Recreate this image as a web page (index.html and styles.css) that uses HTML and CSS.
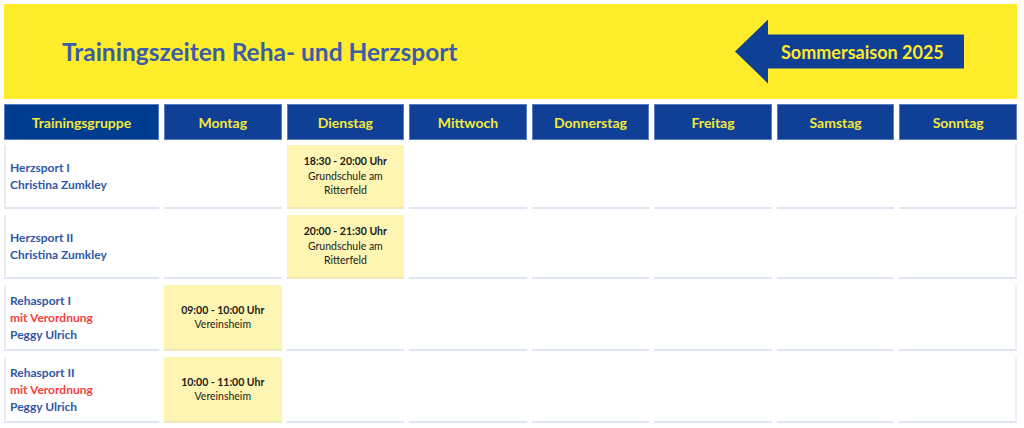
FILE: index.html
```html
<!DOCTYPE html>
<html lang="de">
<head>
<meta charset="utf-8">
<title>Trainingszeiten</title>
<link rel="stylesheet" href="styles.css">
</head>
<body>
<div class="page">
  <header class="banner">
    <h1 class="title">Trainingszeiten Reha- und Herzsport</h1>
    <div class="arrow"><span class="arrow-text">Sommersaison 2025</span></div>
  </header>

  <div class="grid head">
    <div class="hcell first">Trainingsgruppe</div>
    <div class="hcell">Montag</div>
    <div class="hcell">Dienstag</div>
    <div class="hcell">Mittwoch</div>
    <div class="hcell">Donnerstag</div>
    <div class="hcell">Freitag</div>
    <div class="hcell">Samstag</div>
    <div class="hcell">Sonntag</div>
  </div>

  <div class="grid body">
    <div class="cell group"><span>Herzsport I</span><span>Christina Zumkley</span></div>
    <div class="cell"></div>
    <div class="cell slot"><b>18:30 - 20:00 Uhr</b><span>Grundschule am</span><span>Ritterfeld</span></div>
    <div class="cell"></div><div class="cell"></div><div class="cell"></div><div class="cell"></div><div class="cell last"></div>

    <div class="cell group"><span>Herzsport II</span><span>Christina Zumkley</span></div>
    <div class="cell"></div>
    <div class="cell slot"><b>20:00 - 21:30 Uhr</b><span>Grundschule am</span><span>Ritterfeld</span></div>
    <div class="cell"></div><div class="cell"></div><div class="cell"></div><div class="cell"></div><div class="cell last"></div>

    <div class="cell group"><span>Rehasport I</span><span class="red">mit Verordnung</span><span>Peggy Ulrich</span></div>
    <div class="cell slot"><b>09:00 - 10:00 Uhr</b><span>Vereinsheim</span></div>
    <div class="cell"></div><div class="cell"></div><div class="cell"></div><div class="cell"></div><div class="cell"></div><div class="cell last"></div>

    <div class="cell group"><span>Rehasport II</span><span class="red">mit Verordnung</span><span>Peggy Ulrich</span></div>
    <div class="cell slot"><b>10:00 - 11:00 Uhr</b><span>Vereinsheim</span></div>
    <div class="cell"></div><div class="cell"></div><div class="cell"></div><div class="cell"></div><div class="cell"></div><div class="cell last"></div>
  </div>
</div>
</body>
</html>
```
FILE: styles.css
```css
* { box-sizing: border-box; }
html, body { margin: 0; padding: 0; background: #ffffff; }
body {
  font-family: Lato, "Liberation Sans", sans-serif;
  padding: 4px 6px 0 4px;
}
.page { width: 1013px; }

.banner {
  height: 95px;
  background: #ffed2b;
  display: flex;
  align-items: center;
  justify-content: space-between;
  padding: 0 53px 0 58px;
}
.title {
  margin: 0;
  font-size: 24.5px;
  font-weight: 700;
  color: #3c5ca9;
}
.arrow {
  width: 229px;
  height: 64px;
  background: #0f4096;
  clip-path: polygon(0 32px, 33px 0, 33px 15px, 229px 15px, 229px 49px, 33px 49px, 33px 64px);
  display: flex;
  align-items: center;
  padding-left: 46px;
}
.arrow-text {
  color: #ffe92a;
  font-weight: 700;
  font-size: 18px;
}

.grid {
  display: grid;
  grid-template-columns: 155px repeat(7, 1fr);
  column-gap: 5px;
}
.head { margin-top: 5px; height: 36px; }
.hcell {
  background: #0f4096;
  border: 1px solid #5a7cc0;
  color: #f4e83a;
  font-weight: 700;
  font-size: 14px;
  display: flex;
  align-items: center;
  justify-content: center;
}
.hcell.first { background: #003d91; }

.body {
  margin-top: 5px;
  grid-template-rows: 64px 64px 66px 66px;
  row-gap: 6px;
}
.cell {
  background: #ffffff;
  border-bottom: 2px solid #e0e6f3;
}
.cell.last { border-right: 2px solid #eef1f8; }
.group {
  border-left: 2px solid #e6ebf5;
  display: flex;
  flex-direction: column;
  justify-content: center;
  padding-left: 4px;
  color: #2f57a6;
  font-weight: 700;
  font-size: 12px;
  line-height: 17px;
}
.group .red { color: #f2403f; }
.slot {
  background: #fdf5b1;
  border-bottom-color: #ebe7bd;
  display: flex;
  flex-direction: column;
  justify-content: center;
  align-items: center;
  color: #1b1b1b;
  font-size: 10.5px;
  line-height: 14.5px;
}
.slot b { font-weight: 700; }
```
